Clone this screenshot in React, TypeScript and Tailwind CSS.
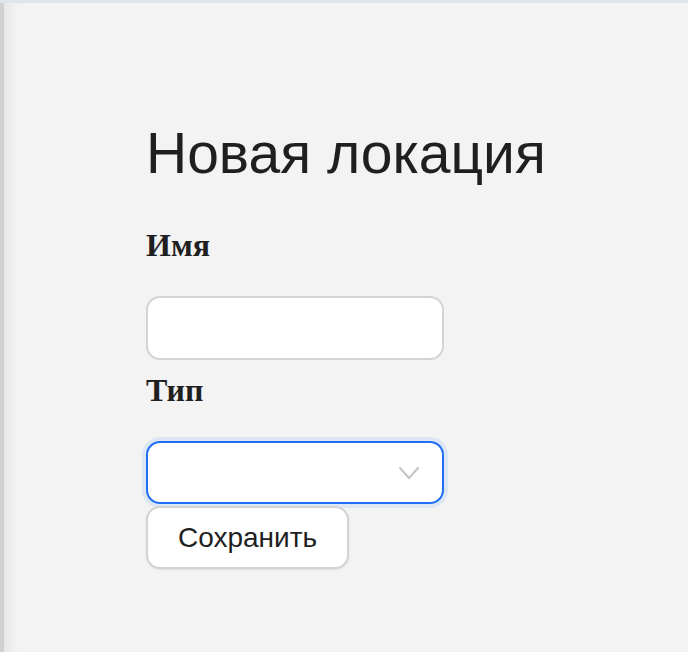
export default function App() {
  return (
    <div className="h-[652px] w-[688px] flex flex-col bg-[#f3f3f3] overflow-hidden">
      <div className="h-[3px] bg-[#dde6ee] shrink-0" />
      <div className="flex flex-1">
        <div className="w-[4px] bg-[#d1d1d1] shrink-0" />
        <main className="flex-1 flex flex-col pl-[142px] pt-[118px] shadow-[inset_14px_0_14px_-10px_rgba(0,0,0,0.07)]">
          <h1 className="text-[57px] leading-[64px] text-[#1f1f1f] font-['Liberation_Sans',Arial,sans-serif]">
            Новая локация
          </h1>

          <label className="mt-[40px] text-[32px] leading-[40px] font-bold text-[#1f1f1f] font-['Liberation_Serif','Times_New_Roman',serif]">
            Имя
          </label>
          <input
            type="text"
            className="mt-[31px] w-[298px] h-[64px] bg-white border-2 border-[#d4d4d4] rounded-[14px] outline-none px-4 text-[24px]"
          />

          <label className="mt-[10px] text-[32px] leading-[40px] font-bold text-[#1f1f1f] font-['Liberation_Serif','Times_New_Roman',serif]">
            Тип
          </label>
          <div className="mt-[31px] w-[298px] h-[63px] bg-white border-2 border-[#1f6ef5] rounded-[14px] ring-[4px] ring-[#dde7f3] flex items-center justify-end pr-[22px]">
            <svg width="22" height="14" viewBox="0 0 22 14" fill="none">
              <path d="M1.5 1.5 L11 12 L20.5 1.5" stroke="#c3c3c3" strokeWidth="2" />
            </svg>
          </div>

          <button className="mt-[2px] w-[203px] h-[63px] bg-white border-2 border-[#d3d3d3] rounded-[14px] shadow-[0_1px_2px_rgba(0,0,0,0.08)] text-[28px] text-[#1f1f1f] font-['Liberation_Sans',Arial,sans-serif] text-left pl-[30px]">
            Сохранить
          </button>
        </main>
      </div>
    </div>
  );
}
